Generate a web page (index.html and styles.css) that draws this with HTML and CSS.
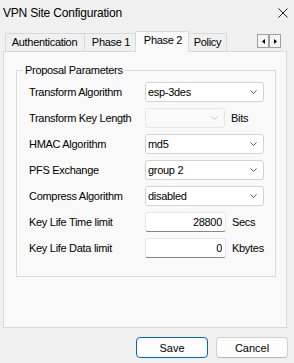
FILE: index.html
```html
<!DOCTYPE html>
<html>
<head>
<meta charset="utf-8">
<link rel="stylesheet" href="styles.css">
</head>
<body>
<div class="window">
  <div class="titlebar">
    <span class="title">VPN Site Configuration</span>
    <svg class="close" width="10" height="10" viewBox="0 0 10 10"><path d="M0.5 0.5L9.5 9.5M9.5 0.5L0.5 9.5" stroke="#1f1f1f" stroke-width="1" fill="none"/></svg>
  </div>
  <div class="tabstrip">
    <div class="tab t-auth">Authentication</div>
    <div class="tab t-p1">Phase 1</div>
    <div class="tab t-p2 active">Phase 2</div>
    <div class="tab t-pol">Policy</div>
    <div class="scroll">
      <div class="sbtn"><svg width="3" height="5" viewBox="0 0 3 5"><path d="M3 0L0 2.5L3 5Z" fill="#000"/></svg></div>
      <div class="sbtn"><svg width="3" height="5" viewBox="0 0 3 5"><path d="M0 0L3 2.5L0 5Z" fill="#000"/></svg></div>
    </div>
  </div>
  <div class="panel">
    <fieldset class="group">
      <legend>Proposal Parameters</legend>
      <div class="row">
        <span class="label">Transform Algorithm</span>
        <div class="combo wide"><span>esp-3des</span><svg width="7" height="4" viewBox="0 0 7 4"><path d="M0.5 0.5L3.5 3.5L6.5 0.5" fill="none" stroke="#5a5a5a" stroke-width="1"/></svg></div>
      </div>
      <div class="row">
        <span class="label">Transform Key Length</span>
        <div class="combo narrow disabled"><span></span><svg width="7" height="4" viewBox="0 0 7 4"><path d="M0.5 0.5L3.5 3.5L6.5 0.5" fill="none" stroke="#c2c2c2" stroke-width="1"/></svg></div>
        <span class="unit">Bits</span>
      </div>
      <div class="row">
        <span class="label">HMAC Algorithm</span>
        <div class="combo wide"><span>md5</span><svg width="7" height="4" viewBox="0 0 7 4"><path d="M0.5 0.5L3.5 3.5L6.5 0.5" fill="none" stroke="#5a5a5a" stroke-width="1"/></svg></div>
      </div>
      <div class="row">
        <span class="label">PFS Exchange</span>
        <div class="combo wide"><span>group 2</span><svg width="7" height="4" viewBox="0 0 7 4"><path d="M0.5 0.5L3.5 3.5L6.5 0.5" fill="none" stroke="#5a5a5a" stroke-width="1"/></svg></div>
      </div>
      <div class="row">
        <span class="label">Compress Algorithm</span>
        <div class="combo wide"><span>disabled</span><svg width="7" height="4" viewBox="0 0 7 4"><path d="M0.5 0.5L3.5 3.5L6.5 0.5" fill="none" stroke="#5a5a5a" stroke-width="1"/></svg></div>
      </div>
      <div class="row spaced">
        <span class="label">Key Life Time limit</span>
        <input class="field" type="text" value="28800">
        <span class="unit">Secs</span>
      </div>
      <div class="row">
        <span class="label">Key Life Data limit</span>
        <input class="field" type="text" value="0">
        <span class="unit">Kbytes</span>
      </div>
    </fieldset>
  </div>
  <div class="actions">
    <button class="btn primary">Save</button>
    <button class="btn">Cancel</button>
  </div>
</div>
</body>
</html>
```
FILE: styles.css
```css
html, body {
  margin: 0;
  padding: 0;
  background: #f0f0f0;
}
body {
  font-family: "Liberation Sans", Arial, sans-serif;
  color: #000;
}
.window {
  width: 294px;
  height: 363px;
  overflow: hidden;
}
.titlebar {
  height: 25px;
  display: flex;
  align-items: center;
  justify-content: space-between;
  padding: 0 6px 0 3px;
}
.title {
  font-size: 12px;
  letter-spacing: -0.2px;
}
.close {
  display: block;
}
.tabstrip {
  display: flex;
  align-items: flex-end;
  height: 21px;
  margin-top: 6px;
  margin-bottom: -1px;
  padding: 0 13px 0 5px;
  position: relative;
  z-index: 1;
}
.tab {
  box-sizing: border-box;
  height: 18px;
  margin-bottom: 1px;
  border: 1px solid #d9d9d9;
  border-bottom: none;
  padding: 0;
  text-align: center;
  font-size: 11px;
  letter-spacing: -0.3px;
  line-height: 17px;
  background: #f0f0f0;
  flex: none;
}
.tab + .tab {
  margin-left: -1px;
}
.t-auth { width: 80px; padding-right: 1px; }
.t-p1 { width: 52px; padding-left: 2px; }
.t-p2 { width: 54px; padding-left: 2px; }
.t-pol { width: 39px; }
.tab.active {
  height: 21px;
  margin-bottom: 0;
  background: #f9f9f9;
  position: relative;
  z-index: 2;
}
.scroll {
  margin-left: auto;
  align-self: flex-start;
  margin-top: 3px;
  display: flex;
}
.sbtn {
  box-sizing: border-box;
  width: 12px;
  height: 14px;
  border: 1px solid #a0a0a0;
  background: #f4f4f4;
  display: flex;
  align-items: center;
  justify-content: center;
}
.sbtn svg {
  display: block;
}
.panel {
  box-sizing: border-box;
  height: 277px;
  margin: 0 7px 0 3px;
  border: 1px solid #dadada;
  background: #f9f9f9;
  padding-top: 12px;
}
.group {
  margin: 0 10px 0 12px;
  border: 1px solid #dcdcdc;
  padding: 5px 10px 18px 6px;
  min-width: 0;
}
.group legend {
  font-size: 11px;
  letter-spacing: -0.3px;
  line-height: 13px;
  padding: 0 2px;
}
.row {
  display: flex;
  align-items: center;
  height: 20px;
  margin-bottom: 6px;
  padding-left: 6px;
}
.row:last-child {
  margin-bottom: 0;
}
.row.spaced {
  margin-top: 2px;
}
.label {
  width: 116px;
  flex: none;
  font-size: 11px;
  letter-spacing: -0.3px;
  white-space: nowrap;
}
.combo {
  box-sizing: border-box;
  height: 20px;
  border: 1px solid #d3d3d3;
  border-radius: 3px;
  background: #fff;
  display: flex;
  align-items: center;
  justify-content: space-between;
  padding: 0 6px 0 2px;
  font-size: 11px;
  letter-spacing: -0.3px;
}
.combo svg {
  display: block;
}
.combo.wide {
  width: 119px;
}
.combo.narrow {
  width: 80px;
}
.combo.disabled {
  background: #f9f9f9;
  border-color: #e6e6e6;
}
.field {
  box-sizing: border-box;
  width: 81px;
  height: 20px;
  margin: 0;
  border: 1px solid #e6e6e6;
  border-bottom: 1px solid #868686;
  border-radius: 3px;
  background: #fff;
  padding: 0 3px 0 2px;
  text-align: right;
  font-family: "Liberation Sans", Arial, sans-serif;
  font-size: 11px;
  letter-spacing: -0.3px;
  color: #000;
  outline: none;
}
.unit {
  margin-left: 6px;
  font-size: 11px;
  letter-spacing: -0.3px;
}
.actions {
  display: flex;
  justify-content: flex-end;
  gap: 8px;
  margin-top: 9px;
  padding-right: 6px;
}
.btn {
  box-sizing: border-box;
  width: 72px;
  height: 21px;
  margin: 0;
  padding: 0;
  border: 1px solid #d0d0d0;
  border-bottom-color: #b9b9b9;
  border-radius: 4px;
  background: #fdfdfd;
  font-family: "Liberation Sans", Arial, sans-serif;
  font-size: 11px;
  color: #000;
}
.btn.primary {
  border: 1px solid #0067c0;
}
```
